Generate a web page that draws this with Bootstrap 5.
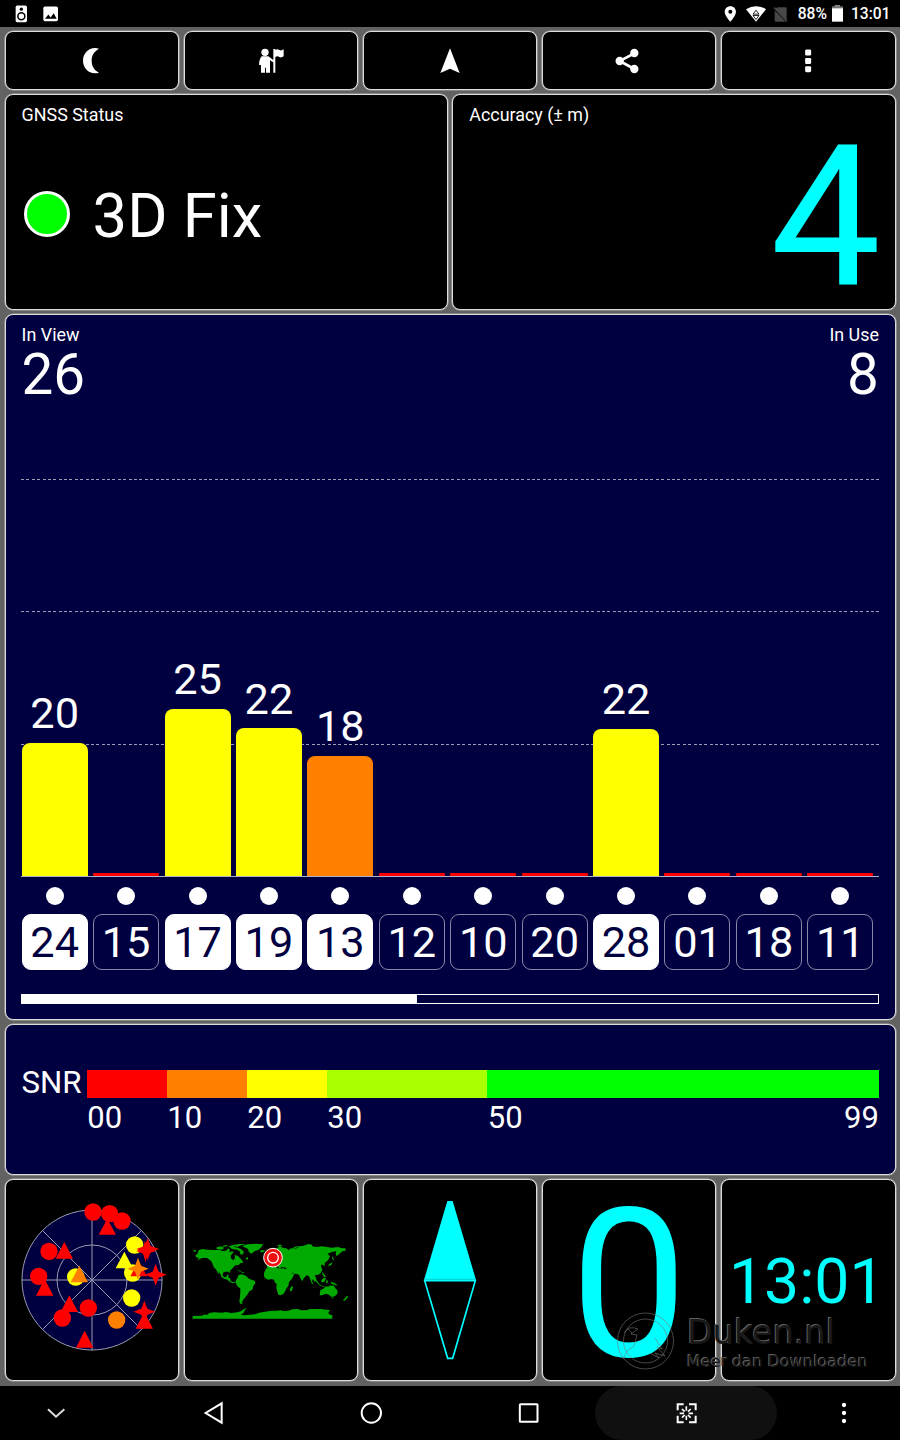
<!DOCTYPE html>
<html lang="en">
<head>
<meta charset="utf-8">
<meta name="viewport" content="width=device-width, initial-scale=1">
<title>GNSS Status</title>
<link href="https://cdn.jsdelivr.net/npm/bootstrap@5.3.0/dist/css/bootstrap.min.css" rel="stylesheet">
<style>
body{font-family:Roboto,"Liberation Sans",sans-serif;background:#626262;color:#fff;line-height:1;width:900px;height:1440px;overflow:hidden}
svg{display:block;flex:none}
.status{height:27px;background:#000;font-size:15.6px;font-weight:500;padding-top:1px}
.status span{padding-top:1.5px}
.dash{padding:4px 4.5px 4.3px;height:1359px;gap:4.2px}
.gap-t{gap:4.3px}
.tile{background:#000;border:1px solid #dcdcdc;box-shadow:0 0 0 .6px #aaa;border-radius:8px;flex:1 1 0;min-width:0}
.panel{flex:none}
.navy{background:#000040}
.pad{padding:11.6px 15.6px 0}
.lbl{font-size:17.9px;height:18.3px;margin-top:-.5px;padding-left:.5px}
.r1{height:58.8px}.r2{height:215.8px}.r3{height:705.8px}.r4{height:150.8px}.r5{height:202.5px}
.r1 svg{transform:translateY(.5px)}
.cy{color:#0ff}
.fixdot{width:46px;height:46px;border:3px solid #fff;background:#0f0;margin:0 23px 0 2.5px}
.fix{font-size:61.5px;padding-top:7px}
.fixrow{margin-top:55px}
.acc{font-size:197px;line-height:.75;margin:19.5px -2px 0 0}
.count{font-size:56.6px;margin-top:3px;padding-left:.4px}
.chead{height:152px}
.plot{height:398px;border-bottom:1px solid #b0b0c4;
 --d:repeating-linear-gradient(90deg,#9c9cb6 0 3px,transparent 3px 5.38px);
 background:var(--d) 0 0/100% 1px no-repeat,var(--d) 0 132px/100% 1px no-repeat,var(--d) 0 265px/100% 1px no-repeat}
.sats{display:grid;grid-template-columns:repeat(12,66px);column-gap:5.43px;padding-left:.6px}
.dots{justify-items:center;margin:10px 0 9.3px}
.num{font-size:43.3px}
.bar{width:66px;border-radius:8px 8px 0 0;background:#ff0;margin-top:7px}
.bar.o{background:#ff8000}
.bar.z{background:#f00;border-radius:1px;height:3px}
.dot{width:18px;height:18px;background:#fff;border-radius:50%}
.prn{height:56px;border:1px solid #8888a6;border-radius:9px;padding-top:6px}
.prn.on{background:#fff;color:#000040;border-color:#fff}
.track{height:10px;border:1px solid #fff;margin-top:24px}
.fill{height:100%;background:#fff}
.snr{font-size:31px;padding:45px 15.6px 0}
.snrlbl{width:66.2px;font-size:31.2px;margin-top:-2.500px;padding-left:.4px}
.snrbar{height:28px}
.speed{font-size:208px}
.speed span{padding-top:9px}
.clock{font-size:62.5px}
.clock span{padding:5px 10px 0 0}
.wm{left:610px;top:1308px}
.navbtm{height:54px;background:#000}
.pill{width:182px;height:54px;border-radius:27px;background:#101010}
</style>
</head>
<body>
<div class="status d-flex align-items-center">
  <svg width="60" height="27" viewBox="0 1.500 180 81" fill="#fff">
    <rect x="47" y="15" width="34" height="50" rx="5"/><circle cx="64" cy="26" r="5" fill="#000"/><circle cx="64" cy="47" r="10.500" fill="none" stroke="#000" stroke-width="4.500"/>
    <rect x="130" y="18" width="44" height="44" rx="5"/><path d="M135 55l10-13 7 9 9-13 9 17z" fill="#000"/>
  </svg>
  <svg class="ms-auto" width="72" height="27" viewBox="808 1.500 216 81">
    <path fill="#fff" fill-rule="evenodd" d="M842 17c-10 0-17 7-17 17 0 12 17 30 17 30s17-18 17-30c0-10-7-17-17-17zm0 10.500a6 6 0 1 1 0 12 6 6 0 0 1 0-12z"/>
    <path fill="#fff" d="M889 26q30-18 60 0L919 64z"/>
    <path d="M919 29l-9 12h18zM919 57l-9-12h18z" fill="#fff" stroke="#000" stroke-width="2.500"/>
    <path d="M985 20h22q4 0 4 4v35l-35-35zM975 30l33 34h-29q-4 0-4-4z" fill="#484848"/><path d="M973 21l39 42" stroke="#484848" stroke-width="4"/>
  </svg>
  <span style="margin-left:6.500px">88%</span>
  <svg class="ms-1" width="13" height="18" viewBox="-1 1 39 54"><path d="M10 1h16v6H10z" fill="#888"/><path d="M2 5h33v12H2z" fill="#777"/><path d="M2 11h33v40H2z" fill="#fff"/></svg>
  <span style="margin:0 9.500px 0 7px">13:01</span>
</div>

<main class="dash d-flex flex-column">
  <div class="r1 d-flex gap-t">
    <div class="tile d-flex align-items-center justify-content-center"><svg width="30" height="30" viewBox="231 136.500 90 90"><path fill="#fff" d="M297 146C270 138 249 158 249 182s21 44 48 36c-17-10-22-22-22-36s5-26 22-36z"/></svg></div>
    <div class="tile d-flex align-items-center justify-content-center"><svg width="30" height="30" viewBox="768 136.500 90 90" fill="#fff"><circle cx="795" cy="157" r="11"/><path d="M785 169h20l15 11v-33h6v3q6-5 12 0 6 3 13-2v21q-7 5-13 2-6-4-12 0v47h-6v-31l-10-6v37h-12v-15h-3v15h-12v-22l-6-2q1-18 8-25z"/></svg></div>
    <div class="tile d-flex align-items-center justify-content-center"><svg width="30" height="30" viewBox="1305 136.500 90 90"><path fill="#fff" d="M1350 145l29 74-29-13-29 13z"/></svg></div>
    <div class="tile d-flex align-items-center justify-content-center"><svg width="30" height="30" viewBox="492 136.500 90 90" fill="#fff"><path d="M553 160l-44 23 44 24" fill="none" stroke="#fff" stroke-width="8"/><circle cx="509" cy="183" r="12.500"/><circle cx="553" cy="159" r="12.500"/><circle cx="553" cy="207" r="12.500"/></svg></div>
    <div class="tile d-flex align-items-center justify-content-center"><svg width="30" height="30" viewBox="1029.600 136.500 90 90" fill="#fff"><rect x="1066" y="148.500" width="18" height="18" rx="4"/><rect x="1066" y="174" width="18" height="18" rx="4"/><rect x="1066" y="198.500" width="18" height="18" rx="4"/></svg></div>
  </div>

  <div class="r2 d-flex gap-t">
    <section class="tile pad">
      <div class="lbl">GNSS Status</div>
      <div class="fixrow d-flex align-items-center"><div class="fixdot rounded-circle"></div><div class="fix">3D Fix</div></div>
    </section>
    <section class="tile pad">
      <div class="lbl">Accuracy (± m)</div>
      <div class="acc cy text-end">4</div>
    </section>
  </div>

  <section class="tile panel navy r3 pad">
    <div class="chead d-flex justify-content-between">
      <div><div class="lbl">In View</div><div class="count">26</div></div>
      <div class="text-end"><div class="lbl">In Use</div><div class="count">8</div></div>
    </div>
    <div class="plot sats align-items-end text-center num">
      <div>20<div class="bar" style="height:133px"></div></div>
      <div class="bar z"></div>
      <div>25<div class="bar" style="height:167px"></div></div>
      <div>22<div class="bar" style="height:147.500px"></div></div>
      <div>18<div class="bar o" style="height:120px"></div></div>
      <div class="bar z"></div><div class="bar z"></div><div class="bar z"></div>
      <div>22<div class="bar" style="height:147px"></div></div>
      <div class="bar z"></div><div class="bar z"></div><div class="bar z"></div>
    </div>
    <div class="sats dots">
      <i class="dot"></i><i class="dot"></i><i class="dot"></i><i class="dot"></i><i class="dot"></i><i class="dot"></i><i class="dot"></i><i class="dot"></i><i class="dot"></i><i class="dot"></i><i class="dot"></i><i class="dot"></i>
    </div>
    <div class="sats num text-center">
      <div class="prn on">24</div><div class="prn">15</div><div class="prn on">17</div><div class="prn on">19</div><div class="prn on">13</div><div class="prn">12</div><div class="prn">10</div><div class="prn">20</div><div class="prn on">28</div><div class="prn">01</div><div class="prn">18</div><div class="prn">11</div>
    </div>
    <div class="track"><div class="fill" style="width:46.150%"></div></div>
  </section>

  <section class="tile panel navy r4 snr d-flex">
    <div class="snrlbl">SNR</div>
    <div class="flex-grow-1">
      <div class="snrbar d-flex"><div style="width:80px;background:#f00"></div><div style="width:80px;background:#ff8000"></div><div style="width:80px;background:#ff0"></div><div style="width:160px;background:#af0"></div><div class="flex-grow-1" style="background:#0f0"></div></div>
      <div class="d-flex mt-1"><div style="width:80px">00</div><div style="width:80px">10</div><div style="width:80px">20</div><div style="width:160.500px">30</div><div>50</div><div class="ms-auto">99</div></div>
    </div>
  </section>

  <div class="r5 d-flex gap-t">
    <div class="tile d-flex align-items-center justify-content-center">
      <svg width="172" height="200" viewBox="18 16 516 600">
        <g stroke="#9a9aae" stroke-width="3" fill="none"><circle cx="276" cy="316" r="210" fill="#000040"/><circle cx="276" cy="316" r="105"/><path d="M276 105v422M65 316h422M127 167l298 298M425 167L127 465"/></g>
        <g fill="#f00"><circle cx="279" cy="112" r="26"/><circle cx="329" cy="117" r="26"/><path d="M322 132l26 48h-52z"/><circle cx="366" cy="139" r="26"/><circle cx="147" cy="230" r="26"/><path d="M193 202l26 50h-52z"/><circle cx="116" cy="305" r="26"/><path d="M134 313l26 50h-52z"/><circle cx="187" cy="430" r="26"/><path d="M208 362l26 50h-52z"/><circle cx="265" cy="400" r="26"/><path d="M254 468l26 51h-52z"/></g>
        <g fill="#ff0"><circle cx="227" cy="307" r="26"/><circle cx="404" cy="211" r="26"/><path d="M373 231l26 50h-52z"/><circle cx="398" cy="295" r="26"/><circle cx="395" cy="370" r="26"/></g>
        <g fill="#f00"><path d="M416 258l25 47h-50z"/><path d="M443 190l9 24 26 9-26 9-9 24-9-24-25-9 25-9z"/><path d="M435 198l8 22 24 9-24 8-6 26-8-26-20-8 20-9zM467 267l9 24 24 9-24 9-9 24-9-24-24-9 24-9zM433 378l9 24 24 9-24 9-9 24-9-24-24-9 24-9zM433 412l26 50h-52z"/></g>
        <g fill="#ff8000"><path d="M238 273l26 50h-52z"/><circle cx="350" cy="436" r="26"/><path d="M414 249l9 24 23 9-23 9-9 24-9-24-23-9 23-9z"/></g>
      </svg>
    </div>
    <div class="tile d-flex align-items-center justify-content-center">
      <svg width="160" height="80" viewBox="33 46 480 240">
        <g fill="#00aa00">
          <path d="M38 274l28-1 4-3 12 0 6-5 14-2 24 1 12-2 16 3 18-2 10-3 10-7 9-3-6 6-4 8-8 6 8 2 12-1 22-2 12-5 14-2 18-3 20-1 14-1 8 2 14-1 12-4 16-1 12 4 14 0 8-3 18-1 16 0 20 2 10 2-6 6 2 6 10 3v10H38z"/>
          <path d="M56 77l11-4 15 2 24 1 12 0 10 3 10-1 8-7 4 5-3 7 9-3 5 3-9 10 1 8 7 6 5-7-1-10 10 4 6 6 6 7 4 7-9 2-5 5-9 1-6 4-3 5-8 7 0 8-4-5-9 0-8 3-1 9 5 4 6-1 3-6 5 0-3 8 7 3 0 8 7 3 5 0 4-3-2 5-8 2-7-4-8-7-9-3-9-5-3-9-6-8 3 9-4-3-6-12-7-6-3-10-5-9-10-8-9-2-10 2-13 7 6-7-9-4-2-5 6-4z"/>
          <path d="M38 76l9 1 4 3-9 1zM108 69l12-4 13 4-7 6-15-1zM124 64l16-3 4 3-12 2zM146 65l14-4 9 2-9 4 9 1 14 5 9 8-4 9-9-3 2-6-10-6-15-2zM157 61l22-3 20 0-16 4-11 5zM186 64l17-5 26-2 20 2-5 9-9 8-12 4-8 7-8-4-3-10zM240 78l7-2 8 2-5 5-8 0zM171 137l10 1 5 5-9-3zM185 143l7 0 0 3-7-1zM197 101l6-4 2 7-5 1z"/>
          <path d="M175 152l8-3 10 2 8 5 6 6 8 3 10 4 1 7-6 8-3 11-9 5-5 9-6 7-5 6-4 6-2 6 2 3-8 0-2-7 2-14 1-13 0-11-9-8-5-9 1-8 4-7z"/>
          <path d="M252 145l5-11 6-6 12-3 11-1 3 5 10 3 11-1 8 3 5 9 6 11 11 0-4 8-9 10-2 12-6 7-3 8-6 9-9 4-6-2-4-12-2-9 1-10-6-7-2-7-7-2-11 2-9-5-3-7z"/>
          <path d="M336 183l3 5-4 12-5-1 0-7zM421 197l9-5 8-7 7 1 6-4 5 3 3-5 6 9 8 9-1 9-7 8-11 2-7-7-9-3-12 5-7 0zM456 218l5 1-3 5zM500 213l5 4-5 5-7 7-4-3 7-6zM452 171l12 4 10 8-9-2-11-4zM405 162l8 9 8 10-6-2-10-12zM417 181l15 3 4 2-16-2zM424 166l8-7 6 2-5 11-9 1zM438 168l6-1-2 9-4-1zM426 141l6 7 6 9-6 0-5-8zM458 111l-4 10-9 4 2-7 8-4zM457 94l4 9-1 6-4-9zM391 151l3 4-3 3z"/>
          <path d="M259 120l2-10 9-2-5-7 10-5 7-8-2-8 10-9 10-6 9 4 9 2 9 5 5-5 16 1 10-7 13-2 14-5 12 2-1 5 15 2 15-2 15 2 15 2 18-2 12 4 10 0 1 7-10 2-7 6-10 9-3-8 2-7-14 2-12 5 7 8-6 12-10 8 0 9-5-2-4-3-2 6 4 10-5 11-9 5-8 0 2 7 3 10-7 3-4-8-3 7 5 10-6-4-4-12-5-10-6-2-10 10-3 8-6-9-3-9-7-4-10-1-5-4 0 3 7 3-5 8-12 6-4-6-8-12-3-8 9-3-2-5-14-2-4 6-9-10-6-3 8 13-7-4-9-7-7 3-6 9z"/>
          <path d="M265 97l5-3 5 10-10 2zM291 61l11-1 5 3-10 3zM338 70l11-5 8-1-15 9z"/>
        </g>
        <circle cx="279" cy="99" r="28" fill="#f01010" stroke="#fff" stroke-width="3"/><circle cx="279" cy="99" r="16" fill="#f01010" stroke="#fff" stroke-width="4"/>
      </svg>
    </div>
    <div class="tile d-flex align-items-center justify-content-center">
      <svg width="54" height="166" viewBox="189 67 162 498"><path d="M262 79h16l70 237H192z" fill="#0ff"/><path d="M194 318h152l-68 233h-15z" fill="none" stroke="#0ff" stroke-width="5"/><path d="M194 314h152" stroke="#00b8b8" stroke-width="2"/></svg>
    </div>
    <div class="tile d-flex align-items-center justify-content-center speed cy"><span>0</span></div>
    <div class="tile d-flex align-items-center justify-content-end clock cy"><span>13:01</span></div>
  </div>
</main>

<svg class="wm position-absolute" width="262" height="66" viewBox="610 1308 262 66">
  <g fill="none" stroke="#777" stroke-opacity=".6" stroke-width="1"><circle cx="645.500" cy="1341" r="28"/><circle cx="645.500" cy="1341" r="22"/><path d="M624 1333q4-8 14-4l-7 5 6 1-3 11-7 5-4 8M628 1329l4 4M655 1338l7 11-5-2 8 9-10-3 4 5-9-5"/></g>
  <g font-family="DejaVu Sans, sans-serif" fill="#181818" style="text-shadow:-1px -1px 0 #606060"><text x="687" y="1344" font-size="34" textLength="148" lengthAdjust="spacingAndGlyphs">Duken.nl</text><text x="687" y="1366.500" font-size="15" textLength="181" lengthAdjust="spacingAndGlyphs">Meer dan Downloaden</text></g>
</svg>

<nav class="navbtm d-flex align-items-center">
  <svg width="595" height="54" viewBox="0 18 1785 162" fill="none" stroke="#fff" stroke-width="6"><path d="M144 88l24 22 25-22" stroke="#ddd"/><path d="M665 70v58l-48-29z"/><circle cx="1114" cy="99" r="29"/><rect x="1559.500" y="72.500" width="53" height="53" rx="2"/></svg>
  <div class="pill d-flex align-items-center justify-content-center"><svg width="24" height="24" viewBox="673 64 72 72" fill="none" stroke="#fff" stroke-width="6"><path d="M684 92V74h18M718 74h20v18M738 108v20h-20M702 128h-18v-20"/><path d="M710 80v13M710 108v13M690 101h13M717 101h13M697 88l8 8M715 106l8 8M723 88l-8 8M705 106l-8 8" stroke-width="5"/></svg></div>
  <svg width="123" height="54" viewBox="981 18 369 162" fill="#fff"><circle cx="1182" cy="75" r="6.500"/><circle cx="1182" cy="99" r="6.500"/><circle cx="1182" cy="123" r="6.500"/></svg>
</nav>
<script src="https://cdn.jsdelivr.net/npm/bootstrap@5.3.0/dist/js/bootstrap.bundle.min.js"></script>
</body>
</html>
